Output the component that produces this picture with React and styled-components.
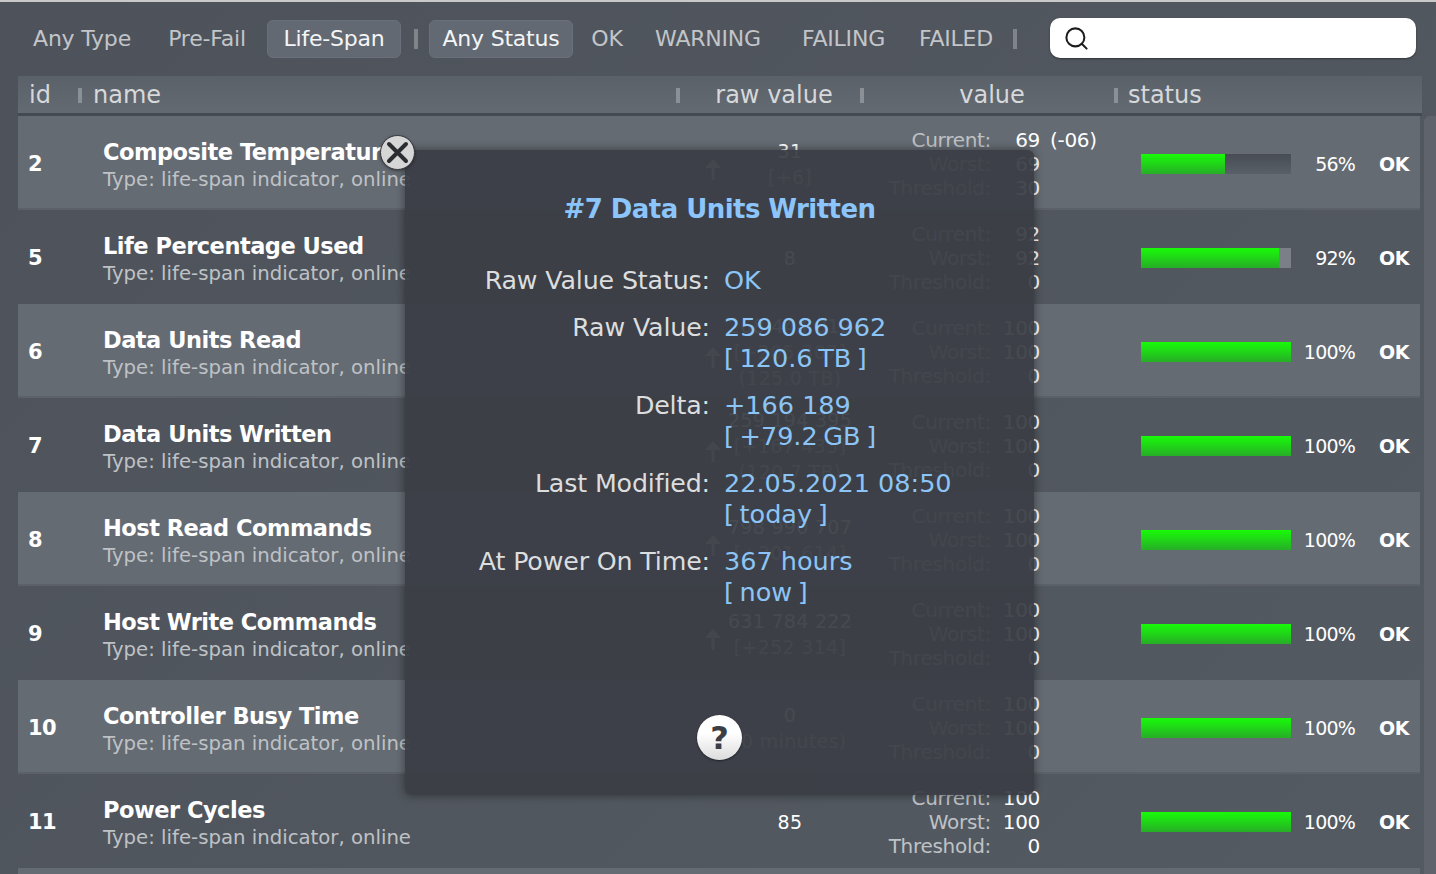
import React from "react";
import styled, { createGlobalStyle } from "styled-components";
import { Search } from "lucide-react";

const FONT = `"DejaVu Sans", "Liberation Sans", sans-serif`;

const Global = createGlobalStyle`
  html, body { margin: 0; padding: 0; height: 100%; overflow: hidden; background: #51575f; }
  * { box-sizing: border-box; }
`;

const Page = styled.div`
  position: relative;
  width: 1436px;
  height: 874px;
  overflow: hidden;
  font-family: ${FONT};
  background: linear-gradient(135deg, #4e535b 0%, #545a62 100%);
  border-top: 2px solid #c9c9c9;
  color: #fff;
`;

const Toolbar = styled.div`
  display: flex;
  align-items: center;
  height: 74px;
  padding-left: 17px;
`;

const FilterButton = styled.div`
  display: flex;
  align-items: center;
  justify-content: center;
  width: ${(p) => p.$w}px;
  margin-right: ${(p) => p.$mr || 0}px;
  height: 38px;
  padding-bottom: 2px;
  border-radius: 6px;
  font-size: 22px;
  letter-spacing: -0.2px;
  white-space: nowrap;
  color: ${(p) => (p.$active ? "#f4f5f6" : "#c2c5c9")};
  background: ${(p) => (p.$active ? "#636973" : "transparent")};
  border: 1px solid ${(p) => (p.$active ? "#6a7079" : "transparent")};
`;

const BarSep = styled.div`
  width: 4px;
  height: 20px;
  margin: 0 ${(p) => p.$r}px 0 ${(p) => p.$l}px;
  background: #7f848a;
`;

const SearchBox = styled.div`
  display: flex;
  align-items: center;
  width: 366px;
  height: 40px;
  margin-bottom: 2px;
  padding-left: 13px;
  background: #fff;
  border-radius: 10px;
  box-shadow: 0 1px 2px rgba(0, 0, 0, 0.4);
  color: #1c1c1c;
`;

const HeaderRow = styled.div`
  display: grid;
  grid-template-columns: 61px 598px 184px 254px 1fr;
  width: 1404px;
  height: 40px;
  margin-left: 18px;
  padding-top: 1px;
  background: linear-gradient(180deg, #5b6169, #646a72);
  border-bottom: 3px solid #454a52;
  font-size: 24px;
  color: #d6d8da;
`;

const HeaderCell = styled.div`
  display: flex;
  align-items: center;
  justify-content: ${(p) => (p.$center ? "center" : "flex-start")};
  position: relative;
  padding-left: ${(p) => p.$pad || 0}px;
`;

const HeaderSep = styled.span`
  position: absolute;
  left: -1px;
  top: 11px;
  width: 4px;
  height: 15px;
  background: #8b9096;
`;

const Body = styled.div`
  display: flex;
`;

const Rows = styled.div`
  width: 1402px;
  margin-left: 18px;
`;

const ScrollThumb = styled.div`
  width: 12px;
  height: 760px;
  margin-left: 4px;
  border-radius: 6px 0 0 0;
  background: #5f646c;
`;

const Row = styled.div`
  display: grid;
  grid-template-columns: 85px 597px 180px 261px 150px 64px 65px;
  align-items: center;
  height: 94px;
  padding-top: 1px;
  background: ${(p) => (p.$light ? "#656b73" : "transparent")};
  box-shadow: ${(p) => (p.$light ? "inset 0 -2px 0 #5c6169" : "none")};
`;

const IdCell = styled.div`
  padding-left: 10px;
  font-size: 21px;
  font-weight: 700;
  letter-spacing: -0.5px;
`;

const NameCell = styled.div`
  display: flex;
  flex-direction: column;
  gap: 3px;
  padding-top: 5px;
  white-space: nowrap;
`;

const Name = styled.div`
  font-size: 22.5px;
  line-height: 26px;
  font-weight: 700;
  letter-spacing: -0.5px;
  margin-top: -2px;
`;

const Desc = styled.div`
  font-size: 19.7px;
  line-height: 24px;
  color: #bfc2c5;
`;

const RawCell = styled.div`
  display: grid;
  grid-template-columns: 26px 1fr 26px;
  align-items: center;
`;

const ArrowSlot = styled.span`
  display: flex;
  margin: 10px 0 0 3px;
`;

const RawLines = styled.div`
  text-align: center;
  font-size: 19px;
  line-height: 26px;
  white-space: nowrap;
  letter-spacing: 0.3px;
`;

const RawMain = styled.div`
  color: #fff;
`;

const RawSub = styled.div`
  color: #c4c7ca;
`;

const ValueCell = styled.div`
  display: flex;
  flex-direction: column;
  margin-top: 1px;
`;

const ValueLine = styled.div`
  display: grid;
  grid-template-columns: 111px 49px auto;
  height: 24px;
  line-height: 24px;
  font-size: 20px;
  letter-spacing: -0.3px;
  white-space: nowrap;
`;

const ValueLabel = styled.span`
  text-align: right;
  color: #bfc2c5;
`;

const ValueNumber = styled.span`
  text-align: right;
`;

const ValueDelta = styled.span`
  padding-left: 10px;
`;

const Bar = styled.div`
  height: 20px;
  width: 150px;
  display: flex;
  background: ${(p) => (p.$light ? "linear-gradient(180deg, #484d55, #5a6068)" : "#7b7f88")};
`;

const BarFill = styled.div`
  height: 100%;
  background: linear-gradient(180deg, #18fb08, #27ad27);
`;

const Percent = styled.div`
  text-align: right;
  font-size: 19px;
  letter-spacing: -0.8px;
`;

const StatusText = styled.div`
  padding-left: 24px;
  font-size: 19px;
  font-weight: 700;
  letter-spacing: -0.5px;
`;

const Modal = styled.div`
  position: absolute;
  left: 405px;
  top: 148px;
  width: 629px;
  height: 645px;
  display: flex;
  flex-direction: column;
  padding-top: 39px;
  background: rgba(58, 62, 69, 0.94);
  border-radius: 0 6px 6px 6px;
  box-shadow: 0 0 10px rgba(0, 0, 0, 0.45);
`;

const ModalTitle = styled.div`
  height: 40px;
  line-height: 40px;
  text-align: center;
  font-size: 26px;
  font-weight: 700;
  letter-spacing: -0.55px;
  color: #8cc5fb;
  margin-bottom: 36px;
`;

const InfoGrid = styled.div`
  display: grid;
  grid-template-columns: 305px 1fr;
  column-gap: 14px;
  row-gap: 16px;
`;

const InfoLabel = styled.div`
  text-align: right;
  font-size: 25.3px;
  line-height: 31px;
  letter-spacing: -0.15px;
  color: #dcdddf;
  white-space: nowrap;
`;

const InfoValue = styled.div`
  font-size: 25.5px;
  line-height: 31px;
  color: #8cc5f5;
  white-space: nowrap;
`;

const InfoSub = styled.div`
  word-spacing: -2.5px;
`;

const HelpButton = styled.div`
  align-self: center;
  margin: auto 0 35px;
  width: 45px;
  height: 45px;
  border-radius: 50%;
  display: flex;
  align-items: center;
  justify-content: center;
  font-size: 32px;
  font-weight: 700;
  color: #3b3e44;
  background: linear-gradient(180deg, #ffffff 40%, #dcdcdc);
  box-shadow: 0 1px 2px rgba(0, 0, 0, 0.5);
`;

const CloseButton = styled.div`
  position: absolute;
  left: 380px;
  top: 133px;
  width: 35px;
  height: 35px;
  border-radius: 50%;
  display: flex;
  align-items: center;
  justify-content: center;
  background: #d6d6d6;
  border: 1px solid #33363b;
  box-shadow: 0 1px 3px rgba(0, 0, 0, 0.4);
`;

const UpArrow = () => (
  <svg width="20" height="22" viewBox="0 0 20 22">
    <path d="M10 1 L18 10 H11.5 V22 H8.5 V10 H2 Z" fill="#ffffff" fillOpacity="0.7" />
  </svg>
);

const CloseIcon = () => (
  <svg width="25" height="25" viewBox="0 0 25 25">
    <path d="M4 4 L21 21 M21 4 L4 21" stroke="#2b2d31" strokeWidth="4" strokeLinecap="round" />
  </svg>
);

const desc = "Type: life-span indicator, online";

const rows = [
  { id: 2, name: "Composite Temperature", raw: ["31"], sub: ["[+6]"], up: true, v: ["69", "69", "30"], delta: "(-06)", pct: 56 },
  { id: 5, name: "Life Percentage Used", raw: ["8"], sub: [], v: ["92", "92", "0"], pct: 92 },
  { id: 6, name: "Data Units Read", raw: ["268 444 012"], sub: ["[+205 307]", "(125.0 TB)"], up: true, v: ["100", "100", "0"], pct: 100 },
  { id: 7, name: "Data Units Written", raw: ["259 194 395"], sub: ["[+167 433]", "(120.7 TB)"], up: true, v: ["100", "100", "0"], pct: 100 },
  { id: 8, name: "Host Read Commands", raw: ["798 990 707"], sub: ["[+201 614]"], up: true, v: ["100", "100", "0"], pct: 100 },
  { id: 9, name: "Host Write Commands", raw: ["631 784 222"], sub: ["[+252 314]"], up: true, v: ["100", "100", "0"], pct: 100 },
  { id: 10, name: "Controller Busy Time", raw: ["0"], sub: ["(0 minutes)"], v: ["100", "100", "0"], pct: 100 },
  { id: 11, name: "Power Cycles", raw: ["85"], sub: [], v: ["100", "100", "0"], pct: 100 },
];

const labels = ["Current:", "Worst:", "Threshold:"];

const info = [
  ["Raw Value Status:", "OK"],
  ["Raw Value:", "259 086 962", "[ 120.6 TB ]"],
  ["Delta:", "+166 189", "[ +79.2 GB ]"],
  ["Last Modified:", "22.05.2021 08:50", "[ today ]"],
  ["At Power On Time:", "367 hours", "[ now ]"],
];

export default function App() {
  return (
    <Page>
      <Global />
      <Toolbar>
        <FilterButton $w={130} $mr={3}>Any Type</FilterButton>
        <FilterButton $w={114} $mr={3}>Pre-Fail</FilterButton>
        <FilterButton $w={134} $active>Life-Span</FilterButton>
        <BarSep $l={13} $r={11} />
        <FilterButton $w={144} $mr={2} $active>Any Status</FilterButton>
        <FilterButton $w={64} $mr={2}>OK</FilterButton>
        <FilterButton $w={134} $mr={11}>WARNING</FilterButton>
        <FilterButton $w={115} $mr={3}>FAILING</FilterButton>
        <FilterButton $w={104}>FAILED</FilterButton>
        <BarSep $l={5} $r={33} />
        <SearchBox>
          <Search size={27} strokeWidth={1.8} />
        </SearchBox>
      </Toolbar>

      <HeaderRow>
        <HeaderCell $pad={11}>id</HeaderCell>
        <HeaderCell $pad={14}><HeaderSep />name</HeaderCell>
        <HeaderCell $center $pad={10}><HeaderSep />raw value</HeaderCell>
        <HeaderCell $center $pad={8}><HeaderSep />value</HeaderCell>
        <HeaderCell $pad={13}><HeaderSep />status</HeaderCell>
      </HeaderRow>

      <Body>
        <Rows>
          {rows.map((r, i) => (
            <Row key={r.id} $light={i % 2 === 0}>
              <IdCell>{r.id}</IdCell>
              <NameCell>
                <Name>{r.name}</Name>
                <Desc>{desc}</Desc>
              </NameCell>
              <RawCell>
                <ArrowSlot>{r.up && <UpArrow />}</ArrowSlot>
                <RawLines>
                  {r.raw.map((t) => <RawMain key={t}>{t}</RawMain>)}
                  {r.sub.map((t) => <RawSub key={t}>{t}</RawSub>)}
                </RawLines>
              </RawCell>
              <ValueCell>
                {labels.map((l, j) => (
                  <ValueLine key={l}>
                    <ValueLabel>{l}</ValueLabel>
                    <ValueNumber>{r.v[j]}</ValueNumber>
                    {j === 0 && r.delta && <ValueDelta>{r.delta}</ValueDelta>}
                  </ValueLine>
                ))}
              </ValueCell>
              <Bar $light={i % 2 === 0}>
                <BarFill style={{ width: `${r.pct}%` }} />
              </Bar>
              <Percent>{r.pct}%</Percent>
              <StatusText>OK</StatusText>
            </Row>
          ))}
          <Row $light />
        </Rows>
        <ScrollThumb />
      </Body>

      <Modal>
        <ModalTitle>#7 Data Units Written</ModalTitle>
        <InfoGrid>
          {info.map(([label, main, sub]) => (
            <React.Fragment key={label}>
              <InfoLabel>{label}</InfoLabel>
              <InfoValue>
                <div>{main}</div>
                {sub && <InfoSub>{sub}</InfoSub>}
              </InfoValue>
            </React.Fragment>
          ))}
        </InfoGrid>
        <HelpButton>?</HelpButton>
      </Modal>
      <CloseButton><CloseIcon /></CloseButton>
    </Page>
  );
}
